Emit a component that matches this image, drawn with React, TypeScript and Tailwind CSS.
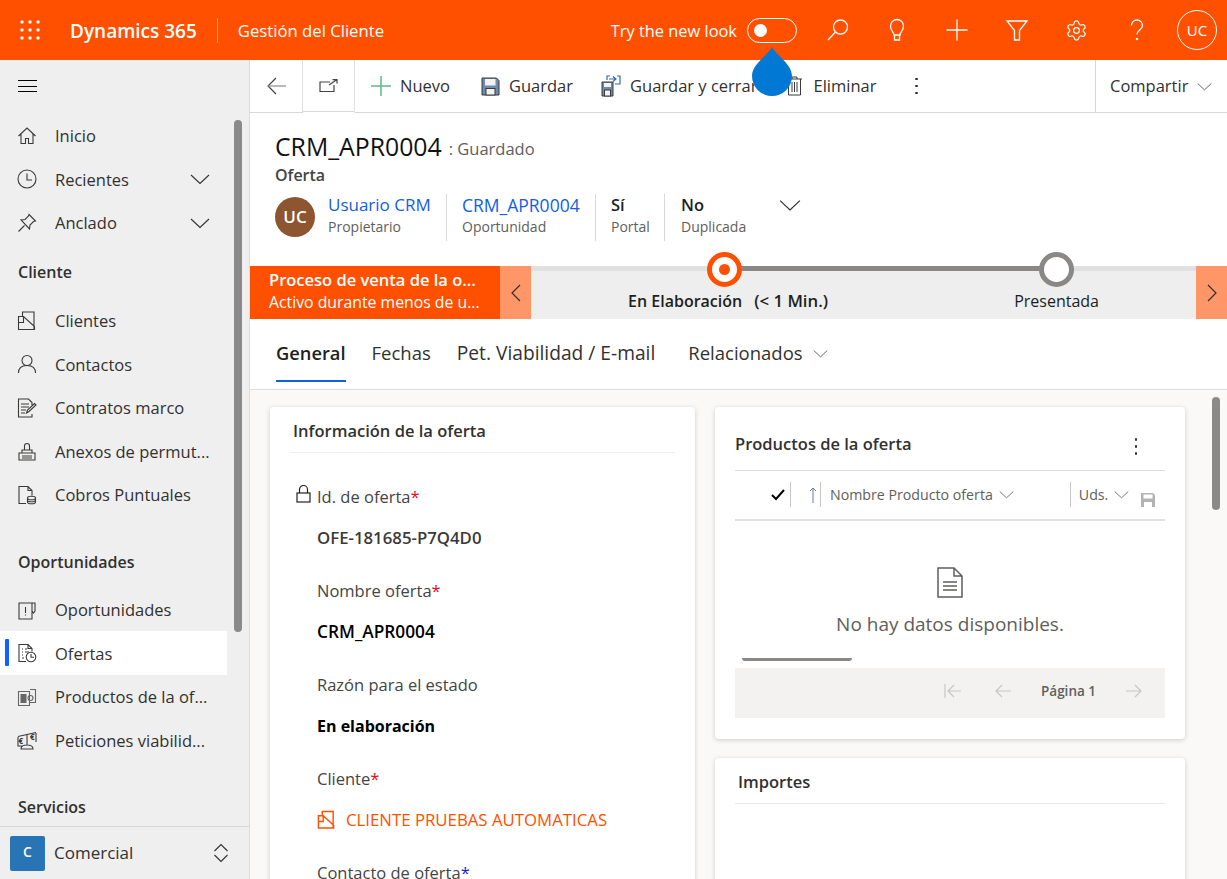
import React from 'react';
import { Settings } from 'lucide-react';

type IconProps = { className?: string };

const Svg: React.FC<{ className?: string; size?: number; children: React.ReactNode }> = ({ className = '', size = 20, children }) => (
  <svg width={size} height={size} viewBox="0 0 20 20" fill="none" stroke="currentColor" strokeWidth={1.1} className={`shrink-0 ${className}`}>
    {children}
  </svg>
);

const Chevron: React.FC<{ size?: number; className?: string }> = ({ size = 20, className = '' }) => (
  <svg width={size} height={size} viewBox="0 0 20 20" fill="none" stroke="currentColor" strokeWidth={1.1} className={`shrink-0 ${className}`}>
    <path d="M1 6l9 8.5L19 6" />
  </svg>
);

const Dots = ({ className = '' }: IconProps) => (
  <span className={`flex flex-col gap-[4.500px] ${className}`}>
    <i className="h-[2.500px] w-[2.500px] rounded-full bg-[#323130]" />
    <i className="h-[2.500px] w-[2.500px] rounded-full bg-[#323130]" />
    <i className="h-[2.500px] w-[2.500px] rounded-full bg-[#323130]" />
  </span>
);

const HomeIcon = () => (
  <Svg><path d="M1.500 10L10 2l8.500 8M4 8v9.500h4.500v-5h3v5H16V8" /></Svg>
);
const ClockIcon = () => (
  <Svg><circle cx="10" cy="10" r="9" /><path d="M10 4.500V11H15" /></Svg>
);
const PinIcon = () => (
  <Svg><path d="M12 1.500l6.500 6.500-2 .5-3.500 3.500-.5 4L4 7l4-.5L11.500 3zM7.500 12.500L1.500 18.500" /></Svg>
);
const AccountIcon: React.FC<IconProps> = ({ className = '' }) => (
  <Svg className={className}><path d="M5.500 5.500V1h11.500v17.500M1.500 18.500V5.500h5l11 10v3zM1.500 11.500h5L6.500 5.500" /></Svg>
);
const PersonIcon = () => (
  <Svg><circle cx="10" cy="6.500" r="5" /><path d="M1.500 19c0-5 3.500-7.500 8.500-7.500s8.500 2.500 8.500 7.500" /></Svg>
);
const ContractIcon = () => (
  <Svg><path d="M15 8V4.500L11.500 1H1.500v18H15v-3M4 6h8M4 9h8M4 12h5M4 15h4M9.500 15l1-3 7-6.500 1.500 1.500-7 6.500z" /></Svg>
);
const StampIcon = () => (
  <Svg><path d="M7.500 9V5a2.500 2.500 0 115 0v4M5 9h10v3H5zM2 12h16v7H2zM5 15h10M5 17h10" /></Svg>
);
const CoinDocIcon = () => (
  <Svg><path d="M9 18.500H2V1.500h9l4 4v5M11 1.500v4h4" /><ellipse cx="14.500" cy="13" rx="4" ry="1.800" /><path d="M10.500 13v4c0 1 1.800 1.800 4 1.800s4-.8 4-1.800v-4M10.500 15c0 1 1.800 1.800 4 1.800s4-.8 4-1.800" /></Svg>
);
const OpportunityIcon = () => (
  <Svg><path d="M15 3H2v16h13zM15 3h3v8l-1.500 2L15 11M8.500 7v6M8.500 14.500v1" /></Svg>
);
const QuoteIcon = () => (
  <Svg><path d="M9 18.500H2V1.500h9l4 4v3M11 1.500v4h4M5 6h1M8 6h2M5 9h1M8 9h4M5 12h1M5 15h2" /><circle cx="14" cy="14" r="4.800" /><path d="M14 11v3.200h3" /></Svg>
);
const ProductsIcon = () => (
  <Svg className="text-[#666]">
    <path d="M1.500 4.500h11v14h-11zM13 2.500h5.500v13H13" />
    <path d="M3.500 7h6v9h-6z" fill="currentColor" stroke="none" />
    <circle cx="13.500" cy="11" r="2.500" />
  </Svg>
);
const ScaleIcon = () => (
  <Svg><path d="M1 6.500L19 2.500M10 5v10M4 19c0-3 2.500-4 6-4s6 1 6 4zM1 7v9h5M19 3v9" /><text x="1.500" y="14" fontSize="8" fill="currentColor" stroke="none" fontWeight="700">€</text><text x="13" y="9.500" fontSize="8" fill="currentColor" stroke="none" fontWeight="700">€</text></Svg>
);

const NavItem: React.FC<{ icon: React.ReactNode; label: string; chevron?: boolean; active?: boolean }> = ({ icon, label, chevron, active }) => (
  <div className={`relative flex h-[43.6px] w-[227px] items-center pl-[17px] ${active ? 'bg-white' : ''}`}>
    {active && <span className="absolute left-[5px] top-[8px] h-[27px] w-[4px] rounded-[1px] bg-[#0f62fe]" />}
    <span className="flex w-[38px] shrink-0 text-[#3b3a39]">{icon}</span>
    <span className="flex-1 truncate pt-[1.500px] text-[16.500px] text-[#323130]">{label}</span>
    {chevron && <Chevron className="mr-[17px] text-[#323130]" />}
  </div>
);

const NavHeader: React.FC<{ label: string; className?: string }> = ({ label, className = '' }) => (
  <div className={`flex h-[54px] items-center pl-[18px] text-[16px] font-semibold text-[#323130] ${className}`}>{label}</div>
);

const Sidebar = () => (
  <aside className="relative flex w-[250px] shrink-0 flex-col border-r border-[#dcdcdc] bg-[#efefef]">
    <div className="h-[54px] pl-[18px] pt-[19px]">
      <div className="flex h-[14px] w-[19px] flex-col justify-between py-[1px]">
        <span className="h-px bg-black" />
        <span className="h-px bg-black" />
        <span className="h-px bg-black" />
      </div>
    </div>
    <div className="min-h-0 flex-1 overflow-hidden">
      <NavItem icon={<HomeIcon />} label="Inicio" />
      <NavItem icon={<ClockIcon />} label="Recientes" chevron />
      <NavItem icon={<PinIcon />} label="Anclado" chevron />
      <NavHeader label="Cliente" />
      <NavItem icon={<AccountIcon />} label="Clientes" />
      <NavItem icon={<PersonIcon />} label="Contactos" />
      <NavItem icon={<ContractIcon />} label="Contratos marco" />
      <NavItem icon={<StampIcon />} label="Anexos de permut..." />
      <NavItem icon={<CoinDocIcon />} label="Cobros Puntuales" />
      <NavHeader label="Oportunidades" className="mt-[17px] pt-[1.500px]" />
      <NavItem icon={<OpportunityIcon />} label="Oportunidades" />
      <NavItem icon={<QuoteIcon />} label="Ofertas" active />
      <NavItem icon={<ProductsIcon />} label="Productos de la of..." />
      <NavItem icon={<ScaleIcon />} label="Peticiones viabilid..." />
      <NavHeader label="Servicios" className="mt-[17px] pt-[2px]" />
    </div>
    <div className="flex h-[53px] shrink-0 items-center border-t border-[#d8d8d8] pl-[10px]">
      <span className="flex h-[35px] w-[35px] items-start justify-center rounded-[2px] bg-[#2874b4] pt-[5px] text-[14px] font-semibold text-white">C</span>
      <span className="ml-[9px] flex-1 text-[17px] font-medium text-[#323130]">Comercial</span>
      <svg width="16" height="20" viewBox="0 0 16 20" fill="none" stroke="#323130" strokeWidth="1.100" className="mr-[20px]">
        <path d="M1.500 8L8 1.500 14.500 8M1.500 12L8 18.500 14.500 12" />
      </svg>
    </div>
    <span className="absolute left-[234px] top-[60px] h-[512px] w-[8px] rounded-[4px] bg-[#8a8a8a]" />
  </aside>
);

const TopBar = () => (
  <header className="relative flex h-[60px] shrink-0 items-center bg-[#ff5000] text-white">
    <svg width="20" height="20" viewBox="0 0 20 20" fill="white" className="ml-[20px] shrink-0">
      {[2, 10, 18].map((cy) => [2, 10, 18].map((cx) => <circle key={`${cx}-${cy}`} cx={cx} cy={cy} r="1.700" />))}
    </svg>
    <span className="ml-[30px] pt-[2px] text-[19px] font-semibold">Dynamics 365</span>
    <span className="ml-[20px] h-[25px] w-px bg-[#ffa27a]" />
    <span className="ml-[20px] pt-[2px] text-[16.700px]">Gestión del Cliente</span>
    <span className="ml-auto pt-[2px] text-[16.400px]">Try the new look</span>
    <span className="ml-[10px] flex h-[25px] w-[50px] items-center rounded-full border border-white pl-[6px]">
      <span className="h-[13px] w-[13px] rounded-full bg-white" />
    </span>
    <div className="flex items-center">
      <svg width="24" height="24" viewBox="0 0 24 24" fill="none" stroke="white" strokeWidth="1.300" className="ml-[29px]">
        <circle cx="14.500" cy="9" r="7" /><path d="M9.500 14L2 22" />
      </svg>
      <svg width="24" height="24" viewBox="0 0 24 24" fill="none" stroke="white" strokeWidth="1.300" className="ml-[35px]">
        <path d="M9 17c0-3-3.500-4-3.500-9a6.500 6.500 0 0113 0c0 5-3.500 6-3.500 9zM9.500 17v5h5v-5" />
      </svg>
      <svg width="24" height="24" viewBox="0 0 24 24" fill="none" stroke="white" strokeWidth="1.300" className="ml-[36px]">
        <path d="M12 1.500v21M1.500 12h21" />
      </svg>
      <svg width="24" height="24" viewBox="0 0 24 24" fill="none" stroke="white" strokeWidth="1.300" className="ml-[36px]">
        <path d="M2 3h20l-7.500 9.500V22h-5v-9.500z" />
      </svg>
      <Settings size={23} strokeWidth={1.250} className="ml-[36px]" />
      <svg width="24" height="24" viewBox="0 0 24 24" fill="none" stroke="white" strokeWidth="1.300" className="ml-[37px]">
        <path d="M6.500 7.500a5.500 5.500 0 1111 0c0 4.500-5.500 4.500-5.500 9" /><circle cx="12" cy="21" r=".6" fill="white" />
      </svg>
      <span className="ml-[28px] mr-[10px] flex h-[40px] w-[40px] items-center justify-center rounded-full border border-white text-[15px]">UC</span>
    </div>
  </header>
);

const ToolButton: React.FC<{ icon: React.ReactNode; label: string; className?: string }> = ({ icon, label, className = '' }) => (
  <div className={`flex items-center ${className}`}>
    {icon}
    <span className="ml-[9px] text-[16.500px] text-[#323130]">{label}</span>
  </div>
);

const SaveGlyph: React.FC<{ className?: string }> = ({ className = '' }) => (
  <svg width="19" height="19" viewBox="0 0 19 19" className={`shrink-0 ${className}`}>
    <path d="M1 1h14.500L18 3.500V18H1z" fill="#6d8bac" stroke="#3b3a39" strokeWidth="1" />
    <rect x="4" y="2" width="10.500" height="6.500" fill="#f2f2f2" />
    <rect x="5" y="11.500" width="9" height="6.500" fill="#f2f2f2" stroke="#3b3a39" />
  </svg>
);

const Toolbar = () => (
  <div className="flex h-[53px] shrink-0 items-stretch border-b border-[#d8d8d8] bg-white">
    <div className="flex w-[53px] items-center justify-center border-r border-[#e1e1e1]">
      <svg width="19" height="18" viewBox="0 0 19 18" fill="none" strokeWidth="1.200">
        <path d="M9 1L1 9l8 8" stroke="#444" /><path d="M1 9h18" stroke="#8a8a8a" />
      </svg>
    </div>
    <div className="-mb-px h-[53px] w-[52px] border-r border-[#e1e1e1] bg-white">
      <div className="flex h-[52px] items-center justify-center border-b border-[#d8d8d8]">
        <svg width="19" height="13" viewBox="0 0 19 13" fill="none" stroke="#444" strokeWidth="1.200">
          <path d="M11 3H1v9.500h14V6M10 6l8-5.500M13.500.6H18v4" />
        </svg>
      </div>
    </div>
    <div className="flex flex-1 items-center pl-[16px]">
      <ToolButton
        label="Nuevo"
        icon={
          <svg width="20" height="20" viewBox="0 0 20 20" stroke="#63b58d" strokeWidth="1.500">
            <path d="M10 0v20M0 10h20" />
          </svg>
        }
      />
      <ToolButton label="Guardar" icon={<SaveGlyph />} className="ml-[31px]" />
      <ToolButton
        label="Guardar y cerrar"
        className="ml-[28px]"
        icon={
          <svg width="20" height="22" viewBox="0 0 20 22" className="shrink-0">
            <path d="M1 7h11v14H1z" fill="#6d8bac" stroke="#3b3a39" />
            <rect x="3" y="8" width="7" height="4" fill="#f2f2f2" />
            <rect x="3.500" y="15" width="6" height="6" fill="#f2f2f2" stroke="#3b3a39" />
            <path d="M6 5V1h3M16 1h3v8h-5M8 4h7M12 1.500L15 4l-3 2.500" fill="none" stroke="#2b6cb0" strokeWidth="1.200" />
          </svg>
        }
      />
      <ToolButton
        label="Eliminar"
        className="ml-[29px]"
        icon={
          <svg width="17" height="20" viewBox="0 0 17 20" fill="none" stroke="#3b3a39" strokeWidth="1" className="mr-[1px] shrink-0">
            <path d="M1 3h15M6 3V1h5v2M2.500 3v16h12V3M6 6v10M8.500 6v10M11 6v10" />
          </svg>
        }
      />
      <Dots className="ml-[39px]" />
    </div>
    <div className="flex w-[132px] items-center border-l border-[#d8d8d8] pl-[14px]">
      <span className="text-[16.500px] text-[#323130]">Compartir</span>
      <Chevron size={15} className="ml-[9px] text-[#444]" />
    </div>
  </div>
);

const Summary: React.FC<{ value: string; label: string; link?: boolean; valueClass?: string; className?: string }> = ({ value, label, link, valueClass = 'text-[17px]', className = '' }) => (
  <div className={`h-[47px] ${className}`}>
    <div className={`leading-[22px] ${link ? `${valueClass} font-medium text-[#1160e0]` : 'text-[16.500px] font-semibold text-[#201f1e]'}`}>{value}</div>
    <div className="mt-[1px] text-[14px] leading-[20px] text-[#605e5c]">{label}</div>
  </div>
);

const RecordHeader = () => (
  <div className="h-[153px] shrink-0 bg-white pl-[25px] pt-[15px]">
    <div className="flex h-[36px] items-baseline">
      <span className="text-[24.800px] font-medium text-[#111]">CRM_APR0004</span>
      <span className="ml-[7px] -translate-y-px text-[16.500px] text-[#605e5c]">: Guardado</span>
    </div>
    <div className="text-[16px] font-semibold leading-[22px] text-[#444]">Oferta</div>
    <div className="mt-[8px] flex items-start">
      <span className="mt-[3px] flex h-[40px] w-[40px] items-center justify-center rounded-full bg-[#8d5630] text-[17px] font-semibold text-white">UC</span>
      <Summary value="Usuario CRM" label="Propietario" link className="ml-[13px] w-[119px] border-r border-[#d8d8d8]" />
      <Summary value="CRM_APR0004" label="Oportunidad" link valueClass="text-[17.500px]" className="w-[149px] border-r border-[#d8d8d8] pl-[15px]" />
      <Summary value="Sí" label="Portal" className="w-[69px] border-r border-[#d8d8d8] pl-[15px]" />
      <Summary value="No" label="Duplicada" className="w-[114px] pl-[16px]" />
      <Chevron size={22} className="text-[#323130]" />
    </div>
  </div>
);

const ProcessBar = () => (
  <div className="relative flex h-[53px] shrink-0 bg-[#eeeeee]">
    <div className="w-[250px] bg-[#ff5000] pl-[19px] pt-[3px] text-white">
      <div className="truncate text-[16.500px] font-semibold leading-[22px]">Proceso de venta de la o...</div>
      <div className="truncate text-[15.800px] leading-[22px]">Activo durante menos de u...</div>
    </div>
    <div className="flex w-[31px] items-center justify-center bg-[#ff9667]">
      <svg width="10" height="18" viewBox="0 0 10 18" fill="none" stroke="#323130" strokeWidth="1.200"><path d="M9 1L1 9l8 8" /></svg>
    </div>
    <div className="relative flex-1">
      <div className="flex h-[5px] bg-[#e0e0e0]">
        <span className="ml-[192px] w-[334px] bg-[#8a8886]" />
      </div>
      <span className="absolute left-[176px] top-[-14px] flex h-[35px] w-[35px] items-center justify-center rounded-full border-[5px] border-[#ff5000] bg-white">
        <i className="h-[11px] w-[11px] rounded-full bg-[#ff5000]" />
      </span>
      <span className="absolute left-[508px] top-[-14px] h-[35px] w-[35px] rounded-full border-[5px] border-[#8a8886] bg-white" />
      <div className="flex items-baseline pt-[18px] text-[16px] leading-[24px] text-[#201f1e]">
        <span className="ml-[97px] font-semibold">En Elaboración</span>
        <span className="ml-[12px] text-[16.800px] font-semibold">(&lt; 1 Min.)</span>
        <span className="ml-[186px]">Presentada</span>
      </div>
    </div>
    <div className="flex w-[31px] items-center justify-center bg-[#ff9667]">
      <svg width="10" height="18" viewBox="0 0 10 18" fill="none" stroke="#323130" strokeWidth="1.200"><path d="M1 1l8 8-8 8" /></svg>
    </div>
  </div>
);

const Tabs = () => (
  <div className="flex h-[71px] shrink-0 items-start border-b border-[#dcdcdc] bg-white pl-[26px] pt-[20px] text-[18.500px] text-[#323130]">
    <span className="flex h-[43px] flex-col border-b-[2px] border-[#1160e0] text-[18.300px] font-semibold text-[#201f1e]">General</span>
    <span className="ml-[26px]">Fechas</span>
    <span className="ml-[26px] text-[19.200px]">Pet. Viabilidad / E-mail</span>
    <span className="ml-[33px]">Relacionados</span>
    <Chevron size={15} className="ml-[10px] mt-[7px] text-[#444]" />
  </div>
);

const Field: React.FC<{ label: string; mark?: string; markClass?: string; lock?: boolean; children: React.ReactNode }> = ({ label, mark, markClass = 'text-[#e00b1c]', lock, children }) => (
  <div className="h-[94px] pl-[27px]">
    <div className="relative h-[24px] text-[16.500px] leading-[24px] text-[#444]">
      {lock && (
        <svg width="15" height="18" viewBox="0 0 15 18" fill="none" stroke="#222" strokeWidth="1.200" className="absolute left-[-21px] top-[0px]">
          <rect x="1" y="8" width="13" height="9" /><path d="M3.500 8V4.500a4 4 0 018 0V8" />
        </svg>
      )}
      {label}
      {mark && <span className={markClass}>{mark}</span>}
    </div>
    <div className="mt-[17px] leading-[24px]">{children}</div>
  </div>
);

const InfoCard = () => (
  <section className="h-[600px] w-[425px] shrink-0 rounded-[4px] bg-white px-[20px] shadow-[0_1px_5px_rgba(0,0,0,0.18)]">
    <div className="h-[46px] border-b border-[#eeeeee] pl-[3px] pt-[12px] text-[16.500px] font-semibold leading-[24px] text-[#323130]">Información de la oferta</div>
    <div className="pt-[32px]">
      <Field label="Id. de oferta" mark="*" lock><span className="text-[16.800px] font-semibold text-[#3b3a39]">OFE-181685-P7Q4D0</span></Field>
      <Field label="Nombre oferta" mark="*"><span className="text-[17.300px] font-semibold text-black">CRM_APR0004</span></Field>
      <Field label="Razón para el estado"><span className="text-[16px] font-bold text-black">En elaboración</span></Field>
      <Field label="Cliente" mark="*">
        <span className="flex items-center text-[16.800px] font-medium text-[#ff5000]">
          <svg width="19" height="20" viewBox="0 0 20 20" fill="none" stroke="#ff5000" strokeWidth="1.500" className="mr-[10px] shrink-0">
            <path d="M5.500 5.500V1h11.500v17.500M1.500 18.500V5.500h5l11 10v3zM1.500 11.500h5V5.500" />
          </svg>
          CLIENTE PRUEBAS AUTOMATICAS
        </span>
      </Field>
      <Field label="Contacto de oferta" mark="*" markClass="text-[#1a1ae0]"><span /></Field>
    </div>
  </section>
);

const Pager = () => (
  <div className="flex h-[50px] items-center bg-[#f3f2f1] pb-[5px] pl-[209px]">
    <svg width="17" height="14" viewBox="0 0 17 14" fill="none" stroke="#c8c6c4" strokeWidth="1.200"><path d="M1 0v14M10 1L4 7l6 6M4 7h13" /></svg>
    <svg width="16" height="14" viewBox="0 0 16 14" fill="none" stroke="#c8c6c4" strokeWidth="1.200" className="ml-[34px]"><path d="M7 1L1 7l6 6M1 7h15" /></svg>
    <span className="ml-[30px] pt-[1px] text-[13.500px] font-semibold text-[#605e5c]">Página 1</span>
    <svg width="16" height="14" viewBox="0 0 16 14" fill="none" stroke="#c8c6c4" strokeWidth="1.200" className="ml-[30px]"><path d="M9 1l6 6-6 6M0 7h15" /></svg>
  </div>
);

const ProductsCard = () => (
  <section className="h-[332px] rounded-[4px] bg-white px-[20px] shadow-[0_1px_5px_rgba(0,0,0,0.18)]">
    <div className="flex h-[64px] items-start border-b border-[#dcdcdc] pt-[24px]">
      <span className="text-[16.500px] font-semibold leading-[26px] text-[#323130]">Productos de la oferta</span>
      <Dots className="ml-[auto] mr-[28px] mt-[7px]" />
    </div>
    <div className="flex h-[50px] items-center border-b-[2px] border-[#e1e1e1] pb-[1px] text-[14.200px] text-[#605e5c]">
      <svg width="14" height="12" viewBox="0 0 14 12" fill="none" stroke="#000" strokeWidth="2" className="ml-[36px]"><path d="M1 6l4 4 8-9" /></svg>
      <span className="ml-[5px] h-[25px] w-px bg-[#c8c6c4]" />
      <svg width="8" height="16" viewBox="0 0 8 16" fill="none" stroke="#6b7a99" strokeWidth="1" className="ml-[18px]"><path d="M4 1v15M1 4l3-3 3 3" /></svg>
      <span className="ml-[3px] h-[25px] w-px bg-[#c8c6c4]" />
      <span className="ml-[9px]">Nombre Producto oferta</span>
      <Chevron size={15} className="ml-[6px]" />
      <span className="ml-[56px] h-[25px] w-px bg-[#c8c6c4]" />
      <span className="ml-[8px]">Uds.</span>
      <Chevron size={15} className="ml-[6px]" />
      <svg width="14" height="14" viewBox="0 0 14 14" className="ml-[12px] mt-[11px]">
        <path d="M0 0h12l2 2v12H0z" fill="#b3b3b3" />
        <rect x="2.500" y="1.500" width="9" height="4" fill="#fff" />
        <rect x="3" y="9" width="8" height="5" fill="#fff" />
      </svg>
    </div>
    <div className="relative flex h-[147px] flex-col items-center pt-[46px]">
      <svg width="26" height="31" viewBox="0 0 26 31" fill="none" stroke="#605e5c" strokeWidth="1.500">
        <path d="M1 1h16l8 8v21H1zM17 1v8h8M6 15h14M6 19h14M6 23h14" />
      </svg>
      <span className="mt-[12px] text-[19px] text-[#605e5c]">No hay datos disponibles.</span>
      <span className="absolute bottom-[7px] left-[7px] h-[3px] w-[110px] rounded-b-[3px] bg-[#8a8886]" />
    </div>
    <Pager />
  </section>
);

const AmountsCard = () => (
  <section className="mt-[19px] h-[200px] rounded-[4px] bg-white px-[20px] shadow-[0_1px_5px_rgba(0,0,0,0.18)]">
    <div className="h-[46px] border-b border-[#e8e8e8] pl-[3px] pt-[11px] text-[16.500px] font-semibold leading-[26px] text-[#323130]">Importes</div>
  </section>
);

export default function App() {
  return (
    <div className="relative flex h-[879px] w-[1227px] flex-col overflow-hidden bg-white font-['Open_Sans','Noto_Sans',sans-serif]">
      <TopBar />
      <div className="flex min-h-0 flex-1">
        <Sidebar />
        <main className="flex min-w-0 flex-1 flex-col">
          <Toolbar />
          <RecordHeader />
          <ProcessBar />
          <Tabs />
          <div className="relative flex min-h-0 flex-1 items-start gap-[20px] overflow-hidden bg-[#faf9f8] pl-[20px] pt-[17px]">
            <InfoCard />
            <div className="w-[470px] shrink-0">
              <ProductsCard />
              <AmountsCard />
            </div>
            <span className="absolute left-[962px] top-[7px] h-[113px] w-[8px] rounded-[4px] bg-[#8a8a8a]" />
          </div>
        </main>
      </div>
      {/* gota azul del tour */}
      <svg width="40" height="49" viewBox="0 0 40 49" className="absolute left-[752px] top-[47px]">
        <path d="M20 0C24 8 40 17 40 29A20 20 0 010 29C0 17 16 8 20 0z" fill="#0078d4" />
      </svg>
    </div>
  );
}
